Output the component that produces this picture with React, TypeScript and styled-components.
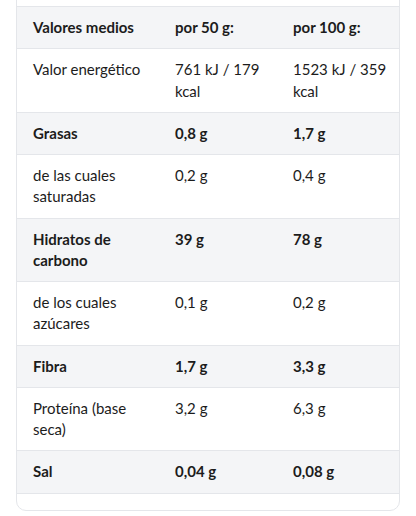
import React from "react";
import styled, { createGlobalStyle } from "styled-components";

const GlobalStyle = createGlobalStyle`
  html, body {
    margin: 0;
    padding: 0;
    background: #ffffff;
  }
  body {
    font-family: Lato, "Open Sans", sans-serif;
    color: #1c1c1c;
    -webkit-font-smoothing: antialiased;
  }
`;

const Page = styled.div`
  padding: 0 16px;
  overflow: hidden;
  height: 516px;
  box-sizing: border-box;
`;

const Card = styled.div`
  margin-top: -20px;
  padding: 25px 0 16px;
  border: 1px solid #e4e6ea;
  border-radius: 10px;
  background: #ffffff;
  box-sizing: border-box;
`;

const Table = styled.table`
  width: 100%;
  border-collapse: collapse;
  table-layout: fixed;
`;

const Row = styled.tr<{ $strong?: boolean }>`
  background: ${(p) => (p.$strong ? "#f4f5f7" : "#ffffff")};
  border-bottom: 1px solid #e4e6ea;
`;

const HeadRow = styled(Row)`
  border-top: 1px solid #e4e6ea;
`;

const Cell = styled.td<{ $strong?: boolean }>`
  padding: 10px 8px 10px 16px;
  font-size: 15px;
  line-height: 21.25px;
  font-weight: ${(p) => (p.$strong ? 700 : 400)};
  vertical-align: top;
  text-align: left;
`;

const HeadCell = styled.th`
  padding: 10px 8px 10px 16px;
  font-size: 15px;
  line-height: 21.25px;
  font-weight: 700;
  vertical-align: top;
  text-align: left;
`;

const rows: { label: string; a: string; b: string; strong?: boolean }[] = [
  { label: "Valor energético", a: "761 kJ / 179 kcal", b: "1523 kJ / 359 kcal" },
  { label: "Grasas", a: "0,8 g", b: "1,7 g", strong: true },
  { label: "de las cuales saturadas", a: "0,2 g", b: "0,4 g" },
  { label: "Hidratos de carbono", a: "39 g", b: "78 g", strong: true },
  { label: "de los cuales azúcares", a: "0,1 g", b: "0,2 g" },
  { label: "Fibra", a: "1,7 g", b: "3,3 g", strong: true },
  { label: "Proteína (base seca)", a: "3,2 g", b: "6,3 g" },
  { label: "Sal", a: "0,04 g", b: "0,08 g", strong: true },
];

export default function App() {
  return (
    <>
      <GlobalStyle />
      <Page>
        <Card>
          <Table>
            <colgroup>
              <col style={{ width: 142 }} />
              <col style={{ width: 118 }} />
              <col />
            </colgroup>
            <thead>
              <HeadRow $strong>
                <HeadCell>Valores medios</HeadCell>
                <HeadCell>por 50 g:</HeadCell>
                <HeadCell>por 100 g:</HeadCell>
              </HeadRow>
            </thead>
            <tbody>
              {rows.map((r) => (
                <Row key={r.label} $strong={r.strong}>
                  <Cell $strong={r.strong}>{r.label}</Cell>
                  <Cell $strong={r.strong}>{r.a}</Cell>
                  <Cell $strong={r.strong}>{r.b}</Cell>
                </Row>
              ))}
            </tbody>
          </Table>
        </Card>
      </Page>
    </>
  );
}
